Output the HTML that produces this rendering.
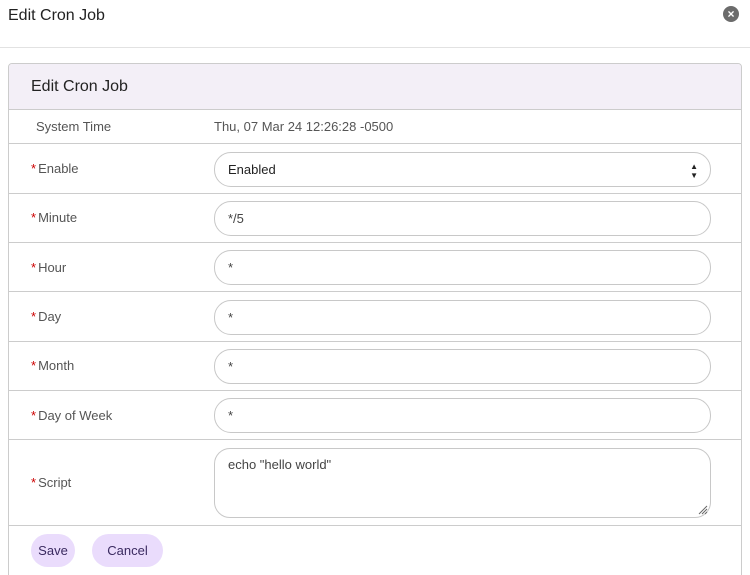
<!DOCTYPE html>
<html style="overflow:hidden;height:575px"><head><style>
body{margin:0;width:750px;height:575px;overflow:hidden;background:#fff;font-family:"Liberation Sans",sans-serif;position:relative}
.t{position:absolute;left:8px;top:7px;font-size:16px;color:#222}
.x{position:absolute;left:723px;top:6px;width:16px;height:16px;border-radius:50%;background:#6b6b6b;color:#fff;font-size:12px;line-height:16px;text-align:center;font-weight:bold}
.hr{position:absolute;left:0;top:47px;width:750px;height:1px;background:#e2e2e2}
.p{position:absolute;left:8px;top:63px;width:732px;height:520px;border:1px solid #ccc;border-radius:4px;overflow:hidden}
.ph{height:45px;background:#f3eff7;border-bottom:1px solid #ccc;font-size:16px;color:#222;line-height:45px;padding-left:22px}
.r{position:relative;border-bottom:1px solid #ccc}
.l{position:absolute;left:22px;font-size:13px;color:#555}
.l b{color:#c00;font-weight:normal;margin-right:2px}
.i{position:absolute;left:205px;border:1px solid #c8c8c8;border-radius:17px;font-size:13px;color:#444;line-height:33px;padding-left:13px;box-sizing:border-box;width:497px;height:35px}
.btn{position:absolute;top:470px;height:33px;border-radius:17px;background:#eadcfc;color:#3a2a60;font-size:13px;line-height:33px;text-align:center}
</style></head><body>
<div class="t">Edit Cron Job</div><div class="x">×</div><div class="hr"></div>
<div class="p">
<div class="ph">Edit Cron Job</div>
<div class="r" style="height:33px"><span class="l" style="top:9px;left:27px">System Time</span><span style="position:absolute;left:205px;top:9px;font-size:13px;color:#555">Thu, 07 Mar 24 12:26:28 -0500</span></div>
<div class="r" style="height:49px"><span class="l" style="top:17px"><b>*</b>Enable</span><div class="i" style="top:8px;color:#222">Enabled<span style="position:absolute;right:12px;font-size:8px;line-height:9px;top:9px">▲<br>▼</span></div></div>
<div class="r" style="height:48px"><span class="l" style="top:16px"><b>*</b>Minute</span><div class="i" style="top:7px">*/5</div></div>
<div class="r" style="height:48px"><span class="l" style="top:17px"><b>*</b>Hour</span><div class="i" style="top:7px">*</div></div>
<div class="r" style="height:49px"><span class="l" style="top:17px"><b>*</b>Day</span><div class="i" style="top:8px">*</div></div>
<div class="r" style="height:48px"><span class="l" style="top:16px"><b>*</b>Month</span><div class="i" style="top:7px">*</div></div>
<div class="r" style="height:48px"><span class="l" style="top:17px"><b>*</b>Day of Week</span><div class="i" style="top:7px">*</div></div>
<div class="r" style="height:85px"><span class="l" style="top:35px"><b>*</b>Script</span><div class="i" style="top:8px;height:70px;line-height:18px;padding-top:7px;border-radius:16px">echo "hello world"<svg style="position:absolute;right:2px;bottom:2px" width="12" height="12"><path d="M11 3L3 11M11 6L6 11M11 9L9 11" stroke="#666" stroke-width="1"/></svg></div></div>
<div class="btn" style="left:22px;width:44px">Save</div>
<div class="btn" style="left:83px;width:71px">Cancel</div>
</div>
</body></html>
